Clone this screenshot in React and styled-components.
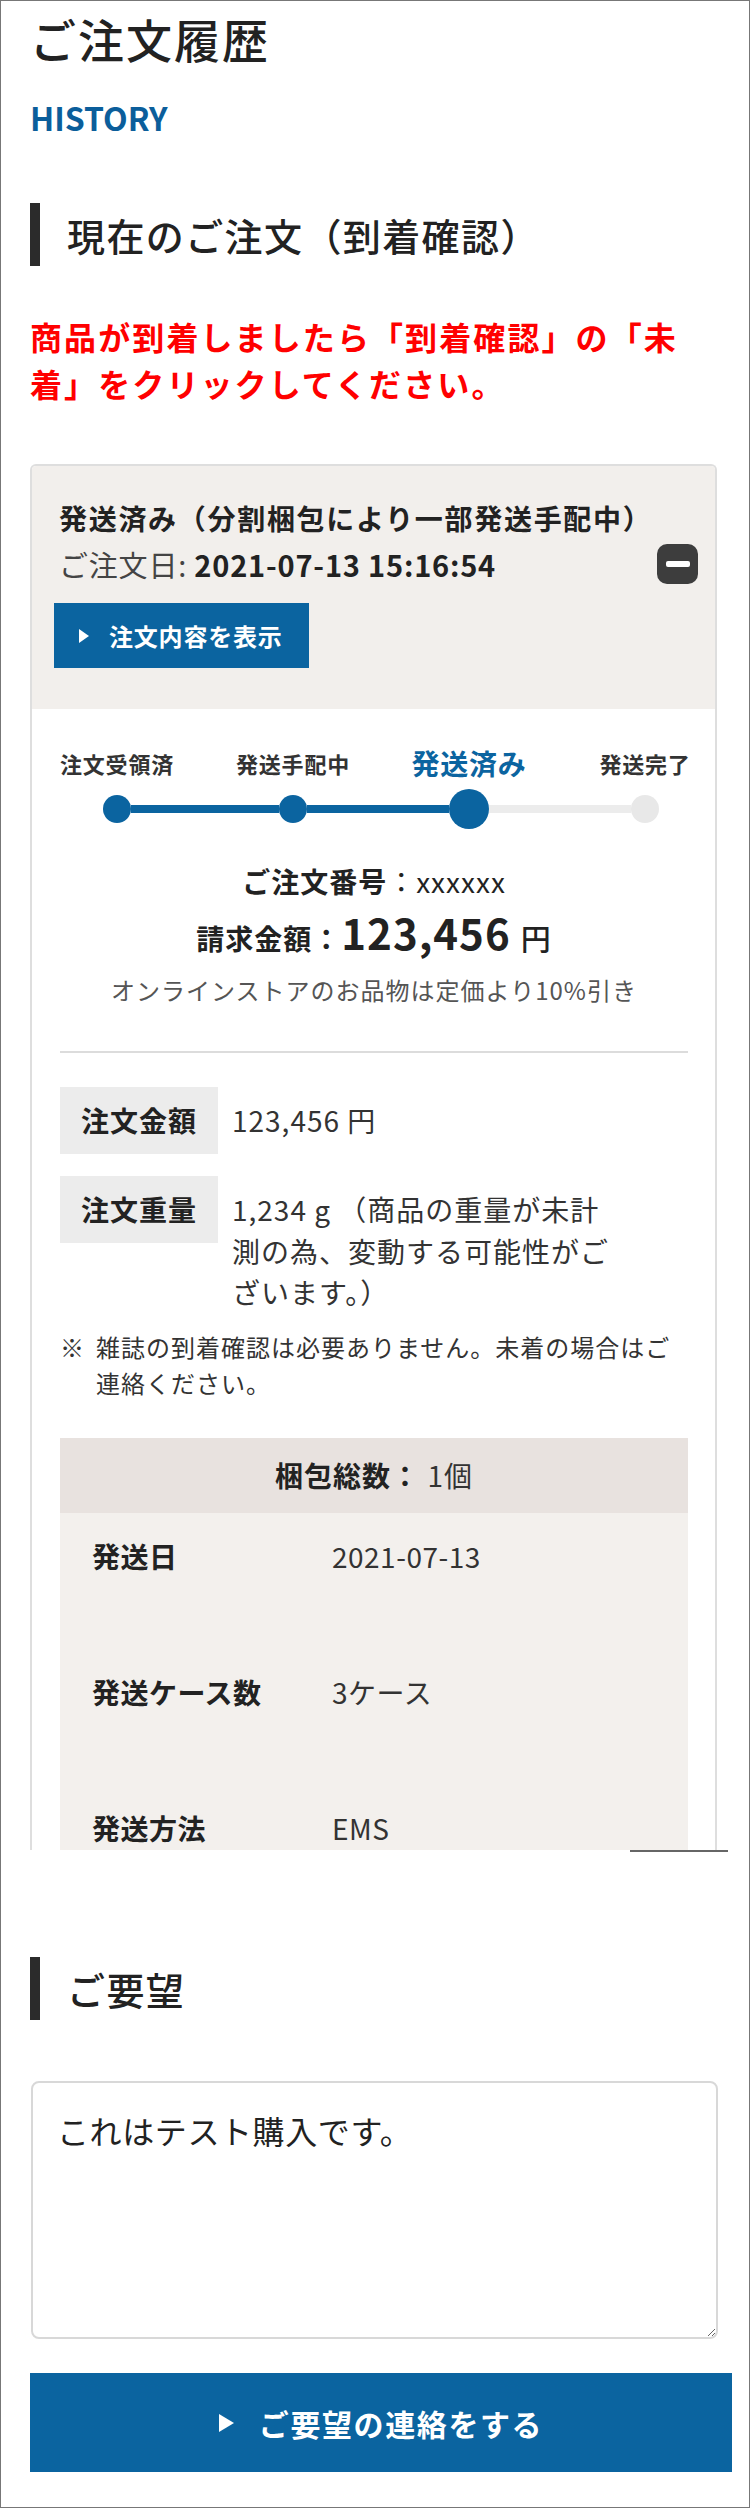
import styled, { createGlobalStyle } from "styled-components";

const blue = "#0b64a0";

const GlobalStyle = createGlobalStyle`
  * {
    box-sizing: border-box;
  }
  body {
    margin: 0;
    background: #fff;
    color: #222;
    font-family: "Noto Sans CJK JP", "Noto Sans", sans-serif;
  }
`;

const Page = styled.div`
  width: 750px;
  height: 2508px;
  border: 1px solid #777;
  padding: 0 32px 0 29px;
  overflow: hidden;
`;

const Title = styled.h1`
  margin: 9px 0 0;
  font-size: 46px;
  line-height: 56px;
  font-weight: 500;
  letter-spacing: 2px;
  color: #222;
`;

const SubTitle = styled.p`
  margin: 35px 0 0;
  font-size: 32px;
  line-height: 32px;
  font-weight: 700;
  color: #0b5e9b;
`;

const SectionHeading = styled.h2`
  display: flex;
  align-items: center;
  height: 63px;
  margin: ${(p) => p.$top}px 0 0;
  font-size: 38px;
  line-height: 1;
  font-weight: 500;
  letter-spacing: 1.4px;
  color: #222;

  &::before {
    content: "";
    align-self: stretch;
    width: 10px;
    margin-right: 27px;
    background: #2b2b2b;
  }
`;

const Notice = styled.p`
  margin: 47px 0 0;
  font-size: 32px;
  line-height: 47px;
  font-weight: 700;
  letter-spacing: 2.1px;
  color: #f00;
`;

const Card = styled.section`
  margin-top: 57px;
  height: 1386px;
  border: 2px solid #dedede;
  border-bottom: none;
  border-radius: 6px 6px 0 0;
  overflow: hidden;
`;

const CardHeader = styled.div`
  background: #f2efec;
  padding: 29px 17px 41px 22px;
`;

const HeaderLine = styled.div`
  display: flex;
  align-items: center;
  justify-content: space-between;
  height: 46px;
  padding-left: 5px;
  font-size: ${(p) => (p.$bold ? 28 : 29)}px;
  line-height: 46px;
  letter-spacing: ${(p) => (p.$bold ? 1.7 : 0.8)}px;
  font-weight: ${(p) => (p.$bold ? 700 : 400)};
`;

const Muted = styled.span`
  color: #444;
  font-weight: 400;
`;

const Strong = styled.b`
  font-weight: 700;
  color: #222;
`;

const MinusButton = styled.span`
  display: flex;
  align-items: center;
  justify-content: center;
  width: 41px;
  height: 40px;
  border-radius: 10px;
  background: #3d3d3d;

  &::after {
    content: "";
    width: 24px;
    height: 6px;
    border-radius: 2px;
    background: #fff;
  }
`;

const Triangle = styled.span`
  width: 0;
  height: 0;
  border-left: ${(p) => p.$w}px solid #fff;
  border-top: ${(p) => p.$h / 2}px solid transparent;
  border-bottom: ${(p) => p.$h / 2}px solid transparent;
`;

const ShowButton = styled.button`
  display: flex;
  align-items: center;
  gap: 20px;
  width: 255px;
  height: 65px;
  margin-top: 16px;
  padding: 0 0 0 25px;
  border: none;
  background: ${blue};
  color: #fff;
  font-family: inherit;
  font-size: 24px;
  font-weight: 700;
  letter-spacing: 0.8px;
`;

const CardBody = styled.div`
  padding: 39px 27px 0 28px;
`;

const StepGrid = styled.div`
  display: grid;
  grid-template-columns: repeat(4, 1fr);
  margin: ${(p) => p.$top || 0}px -45px 0 -31px;
`;

const StepLabel = styled.div`
  height: 30px;
  text-align: center;
  font-size: ${(p) => (p.$active ? 28 : 22)}px;
  line-height: 30px;
  font-weight: 700;
  letter-spacing: 0.8px;
  color: ${(p) => (p.$active ? blue : "#333")};
`;

const DotCell = styled.div`
  display: flex;
  align-items: center;
  height: 40px;
`;

const Line = styled.span`
  flex: 1;
  height: 8px;
  background: ${(p) => p.$color};
`;

const Dot = styled.span`
  flex: none;
  width: ${(p) => p.$size}px;
  height: ${(p) => p.$size}px;
  border-radius: 50%;
  background: ${(p) => p.$color};
`;

const Center = styled.p`
  margin: ${(p) => p.$top}px 0 0;
  text-align: center;
  font-size: 28px;
  line-height: ${(p) => p.$lh}px;
  letter-spacing: 1px;
  color: #222;
`;

const Big = styled.span`
  font-size: 42px;
  font-weight: 700;
  letter-spacing: 1px;
`;

const Yen = styled.span`
  margin-left: 10px;
  font-size: 30px;
  font-weight: 500;
`;

const Discount = styled.p`
  margin: 10px 0 0;
  text-align: center;
  font-size: 24px;
  line-height: 34px;
  letter-spacing: 1px;
  color: #555;
`;

const Divider = styled.hr`
  margin: 44px 0 0;
  height: 2px;
  border: none;
  background: #dcdcdc;
`;

const DetailRow = styled.div`
  display: flex;
  align-items: flex-start;
  margin-top: ${(p) => p.$top}px;
`;

const DetailLabel = styled.div`
  flex: none;
  width: 158px;
  height: 67px;
  background: #ececec;
  text-align: center;
  font-size: 28px;
  line-height: 67px;
  font-weight: 700;
  letter-spacing: 1px;
`;

const DetailValue = styled.div`
  margin-left: 14px;
  padding-top: 13px;
  font-size: 28px;
  line-height: 41.5px;
  letter-spacing: 1px;
  color: #333;
`;

const Note = styled.div`
  display: flex;
  margin-top: 15px;
  font-size: 24px;
  line-height: 36px;
  letter-spacing: 1px;
  color: #333;
`;

const NoteMark = styled.span`
  flex: none;
  width: 36px;
`;

const Package = styled.div`
  margin-top: 37px;
  background: #f3f0ed;
`;

const PackageHead = styled.div`
  height: 75px;
  background: #e8e2df;
  text-align: center;
  font-size: 28px;
  line-height: 75px;
  font-weight: 700;
  letter-spacing: 1px;
`;

const PackageRow = styled.div`
  display: flex;
  padding: 23px 0 73px 32px;
  font-size: 28px;
  line-height: 40px;
  letter-spacing: 0.5px;
`;

const PackageLabel = styled.span`
  width: 240px;
  font-weight: 700;
`;

const PackageValue = styled.span`
  color: #333;
  font-weight: 400;
`;

const CutLine = styled.div`
  width: 98px;
  height: 2px;
  margin: 0 -11px 0 auto;
  background: #666;
`;

const Request = styled.textarea`
  display: block;
  width: 687px;
  height: 258px;
  margin: 61px 0 0 1px;
  padding: 24px 24px;
  border: 2px solid #d8d8d8;
  border-radius: 8px;
  font-family: inherit;
  font-size: 32px;
  line-height: 46px;
  letter-spacing: 0.6px;
  color: #222;
`;

const SubmitButton = styled.button`
  display: flex;
  align-items: center;
  justify-content: center;
  gap: 25px;
  width: 702px;
  height: 99px;
  margin-top: 34px;
  border: none;
  background: ${blue};
  color: #fff;
  font-family: inherit;
  font-size: 30px;
  font-weight: 700;
  letter-spacing: 1.6px;
`;

const steps = [
  { label: "注文受領済", left: "transparent", right: blue, dot: blue, size: 28 },
  { label: "発送手配中", left: blue, right: blue, dot: blue, size: 28 },
  { label: "発送済み", left: blue, right: "#ececec", dot: blue, size: 40, active: true },
  { label: "発送完了", left: "#ececec", right: "transparent", dot: "#e8e8e8", size: 28 },
];

const packageRows = [
  ["発送日", "2021-07-13"],
  ["発送ケース数", "3ケース"],
  ["発送方法", "EMS"],
];

export default function App() {
  return (
    <>
      <GlobalStyle />
      <Page>
        <Title>ご注文履歴</Title>
        <SubTitle>HISTORY</SubTitle>

        <SectionHeading $top={70}>現在のご注文（到着確認）</SectionHeading>
        <Notice>商品が到着しましたら「到着確認」の「未着」をクリックしてください。</Notice>

        <Card>
          <CardHeader>
            <HeaderLine $bold>発送済み（分割梱包により一部発送手配中）</HeaderLine>
            <HeaderLine>
              <span>
                <Muted>ご注文日: </Muted>
                <Strong>2021-07-13 15:16:54</Strong>
              </span>
              <MinusButton />
            </HeaderLine>
            <ShowButton>
              <Triangle $w={10} $h={14} />
              注文内容を表示
            </ShowButton>
          </CardHeader>

          <CardBody>
            <StepGrid>
              {steps.map((s) => (
                <StepLabel key={s.label} $active={s.active}>
                  {s.label}
                </StepLabel>
              ))}
            </StepGrid>
            <StepGrid $top={11}>
              {steps.map((s) => (
                <DotCell key={s.label}>
                  <Line $color={s.left} />
                  <Dot $size={s.size} $color={s.dot} />
                  <Line $color={s.right} />
                </DotCell>
              ))}
            </StepGrid>

            <Center $top={32} $lh={40}>
              <Strong>ご注文番号</Strong>：xxxxxx
            </Center>
            <Center $top={6} $lh={50}>
              <Strong>請求金額：</Strong>
              <Big>123,456</Big>
              <Yen>円</Yen>
            </Center>
            <Discount>オンラインストアのお品物は定価より10%引き</Discount>

            <Divider />

            <DetailRow $top={34}>
              <DetailLabel>注文金額</DetailLabel>
              <DetailValue>123,456 円</DetailValue>
            </DetailRow>
            <DetailRow $top={22}>
              <DetailLabel>注文重量</DetailLabel>
              <DetailValue>
                1,234 g （商品の重量が未計
                <br />
                測の為、変動する可能性がご
                <br />
                ざいます。）
              </DetailValue>
            </DetailRow>
            <Note>
              <NoteMark>※</NoteMark>
              <span>雑誌の到着確認は必要ありません。未着の場合はご連絡ください。</span>
            </Note>

            <Package>
              <PackageHead>
                梱包総数： <PackageValue>1個</PackageValue>
              </PackageHead>
              {packageRows.map(([label, value]) => (
                <PackageRow key={label}>
                  <PackageLabel>{label}</PackageLabel>
                  <PackageValue>{value}</PackageValue>
                </PackageRow>
              ))}
            </Package>
          </CardBody>
        </Card>
        <CutLine />

        <SectionHeading $top={105}>ご要望</SectionHeading>
        <Request defaultValue="これはテスト購入です。" />
        <SubmitButton>
          <Triangle $w={15} $h={18} />
          ご要望の連絡をする
        </SubmitButton>
      </Page>
    </>
  );
}
